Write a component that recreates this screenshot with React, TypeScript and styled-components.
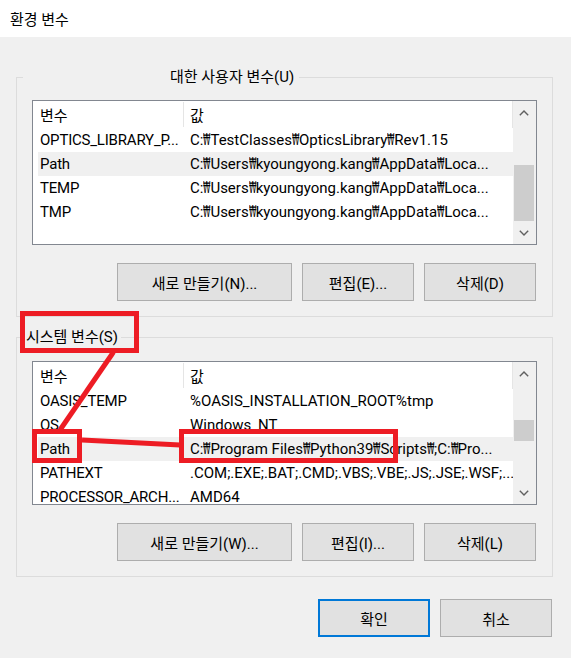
import React from 'react';
import styled, { createGlobalStyle } from 'styled-components';

const FONT = `Roboto, "Noto Sans CJK KR", sans-serif`;

const GlobalStyle = createGlobalStyle`
  html, body { margin: 0; padding: 0; background: #f0f0f0; }
  body { font-family: ${FONT}; }
  * { box-sizing: border-box; }
`;

const Window = styled.div`
  position: relative;
  width: 571px;
  height: 658px;
  background: #f0f0f0;
  display: flex;
  flex-direction: column;
  font-family: ${FONT};
  font-size: 15px;
  color: #000;
  overflow: hidden;
`;

const TitleBar = styled.div`
  height: 37px;
  flex: none;
  background: #fff;
  display: flex;
  align-items: center;
  padding-left: 10px;
  font-size: 15px;
`;

const Body = styled.div`
  display: flex;
  flex-direction: column;
  padding: 30px 18px 0 16px;
`;

const Group = styled.fieldset<{ $gap?: number }>`
  margin: ${(p) => p.$gap ?? 0}px 0 0 0;
  padding: 0 15px 15px 15px;
  border: 1px solid #dcdcdc;
  min-inline-size: 0;
  display: flex;
  flex-direction: column;
`;

const Legend = styled.legend<{ $indent?: number }>`
  margin-left: -9px;
  padding: 0 ${(p) => (p.$indent ? 5 : 3)}px 0 ${(p) => p.$indent ?? 3}px;
  line-height: 20px;
  height: 20px;
  font-size: 15px;
`;

const ListView = styled.div<{ $top: number; $height: number }>`
  margin-top: ${(p) => p.$top}px;
  height: ${(p) => p.$height}px;
  border: 1px solid #828790;
  background: #fff;
  display: flex;
`;

const ListContent = styled.div`
  flex: 1;
  min-width: 0;
  display: flex;
  flex-direction: column;
  overflow: hidden;
`;

const HeaderRow = styled.div`
  height: 27px;
  flex: none;
  display: grid;
  grid-template-columns: 150px 1fr;
  border-right: 1px solid #e5e5e5;
`;

const HeaderCell = styled.div<{ $sep?: boolean }>`
  display: flex;
  align-items: center;
  padding-left: ${(p) => (p.$sep ? 6 : 7)}px;
  margin: 1px 0 1px 0;
  border-left: ${(p) => (p.$sep ? '1px solid #e5e5e5' : 'none')};
`;

const Row = styled.div<{ $hl?: boolean }>`
  height: 24px;
  flex: none;
  margin-left: 5px;
  display: grid;
  grid-template-columns: 145px 1fr;
  align-items: center;
  background: ${(p) => (p.$hl ? '#f0f0f0' : 'transparent')};
`;

const Cell = styled.div<{ $second?: boolean }>`
  padding-left: ${(p) => (p.$second ? 7 : 2)}px;
  white-space: nowrap;
  overflow: hidden;
  line-height: 24px;
  letter-spacing: ${(p) => (p.$second ? 0 : -0.2)}px;
`;

const Won = styled.span`
  display: inline-block;
  width: 7px;
  white-space: nowrap;
  font-family: "DejaVu Sans", "Noto Sans", sans-serif;
  transform: scaleX(0.5);
  transform-origin: 0 50%;
`;

const ScrollBar = styled.div`
  width: 23px;
  flex: none;
  background: #f0f0f0;
  display: flex;
  flex-direction: column;
`;

const ArrowButton = styled.div`
  height: 23px;
  flex: none;
  display: flex;
  align-items: center;
  justify-content: center;
  padding-right: 1px;
`;

const Track = styled.div`
  flex: 1;
  display: flex;
  flex-direction: column;
`;

const Thumb = styled.div<{ $top: number; $size: number }>`
  margin: ${(p) => p.$top}px 2px 0 1px;
  height: ${(p) => p.$size}px;
  background: #cdcdcd;
`;

const ButtonRow = styled.div<{ $top: number }>`
  margin-top: ${(p) => p.$top}px;
  display: flex;
  justify-content: flex-end;
  gap: 10px;
  padding-right: 1px;
`;

const Button = styled.button<{ $w: number; $default?: boolean }>`
  width: ${(p) => p.$w}px;
  height: 38px;
  margin: 0;
  padding: 0;
  background: #e1e1e1;
  border: ${(p) => (p.$default ? '2px solid #0078d7' : '1px solid #adadad')};
  font-family: ${FONT};
  font-size: 15px;
  color: #000;
`;

const Overlay = styled.svg`
  position: absolute;
  left: 0;
  top: 0;
  pointer-events: none;
`;

const Chevron = ({ up }: { up?: boolean }) => (
  <svg width="10" height="6" viewBox="0 0 10 6">
    <polyline
      points={up ? '0.8,5.2 5,1 9.2,5.2' : '0.8,0.8 5,5 9.2,0.8'}
      fill="none"
      stroke="#606060"
      strokeWidth="1.4"
    />
  </svg>
);

const PathText = ({ text }: { text: string }) => {
  const parts = text.split('₩');
  return (
    <>
      {parts.map((p, i) => (
        <React.Fragment key={i}>
          {i > 0 && <Won>₩</Won>}
          {p}
        </React.Fragment>
      ))}
    </>
  );
};

type Item = [string, string, boolean?];

const userVars: Item[] = [
  ['OPTICS_LIBRARY_P...', 'C:₩TestClasses₩OpticsLibrary₩Rev1.15'],
  ['Path', 'C:₩Users₩kyoungyong.kang₩AppData₩Loca...', true],
  ['TEMP', 'C:₩Users₩kyoungyong.kang₩AppData₩Loca...'],
  ['TMP', 'C:₩Users₩kyoungyong.kang₩AppData₩Loca...'],
];

const sysVars: Item[] = [
  ['OASIS_TEMP', '%OASIS_INSTALLATION_ROOT%tmp'],
  ['OS', 'Windows_NT'],
  ['Path', 'C:₩Program Files₩Python39₩Scripts₩;C:₩Pro...', true],
  ['PATHEXT', '.COM;.EXE;.BAT;.CMD;.VBS;.VBE;.JS;.JSE;.WSF;....'],
  ['PROCESSOR_ARCH...', 'AMD64'],
];

const VarList = ({
  items,
  top,
  height,
  thumbTop,
  thumbSize,
}: {
  items: Item[];
  top: number;
  height: number;
  thumbTop: number;
  thumbSize: number;
}) => (
  <ListView $top={top} $height={height}>
    <ListContent>
      <HeaderRow>
        <HeaderCell>변수</HeaderCell>
        <HeaderCell $sep>값</HeaderCell>
      </HeaderRow>
      {items.map(([k, v, hl], i) => (
        <Row key={i} $hl={hl}>
          <Cell>{k}</Cell>
          <Cell $second>
            <PathText text={v} />
          </Cell>
        </Row>
      ))}
    </ListContent>
    <ScrollBar>
      <ArrowButton>
        <Chevron up />
      </ArrowButton>
      <Track>
        <Thumb $top={thumbTop} $size={thumbSize} />
      </Track>
      <ArrowButton>
        <Chevron />
      </ArrowButton>
    </ScrollBar>
  </ListView>
);

export default function App() {
  return (
    <>
      <GlobalStyle />
      <Window>
        <TitleBar>환경 변수</TitleBar>
        <Body>
          <Group>
            <Legend $indent={147}>대한 사용자 변수(U)</Legend>
            <VarList items={userVars} top={13} height={145} thumbTop={41} thumbSize={56} />
            <ButtonRow $top={18}>
              <Button $w={175}>새로 만들기(N)...</Button>
              <Button $w={112}>편집(E)...</Button>
              <Button $w={112}>삭제(D)</Button>
            </ButtonRow>
          </Group>
          <Group $gap={10}>
            <Legend>시스템 변수(S)</Legend>
            <VarList items={sysVars} top={14} height={144} thumbTop={35} thumbSize={21} />
            <ButtonRow $top={18}>
              <Button $w={175}>새로 만들기(W)...</Button>
              <Button $w={112}>편집(I)...</Button>
              <Button $w={112}>삭제(L)</Button>
            </ButtonRow>
          </Group>
          <ButtonRow $top={22}>
            <Button $w={112} $default>
              확인
            </Button>
            <Button $w={112}>취소</Button>
          </ButtonRow>
        </Body>
        <Overlay width="571" height="658" viewBox="0 0 571 658">
          <g fill="none" stroke="#ed1c24" strokeWidth="5">
            <rect x="22.5" y="313.5" width="114" height="37" />
            <rect x="34.5" y="431.5" width="45" height="29" />
            <rect x="181.5" y="431.5" width="214" height="29" />
            <line x1="113.5" y1="352" x2="60" y2="430" />
            <line x1="82" y1="440" x2="180" y2="445" />
          </g>
        </Overlay>
      </Window>
    </>
  );
}
